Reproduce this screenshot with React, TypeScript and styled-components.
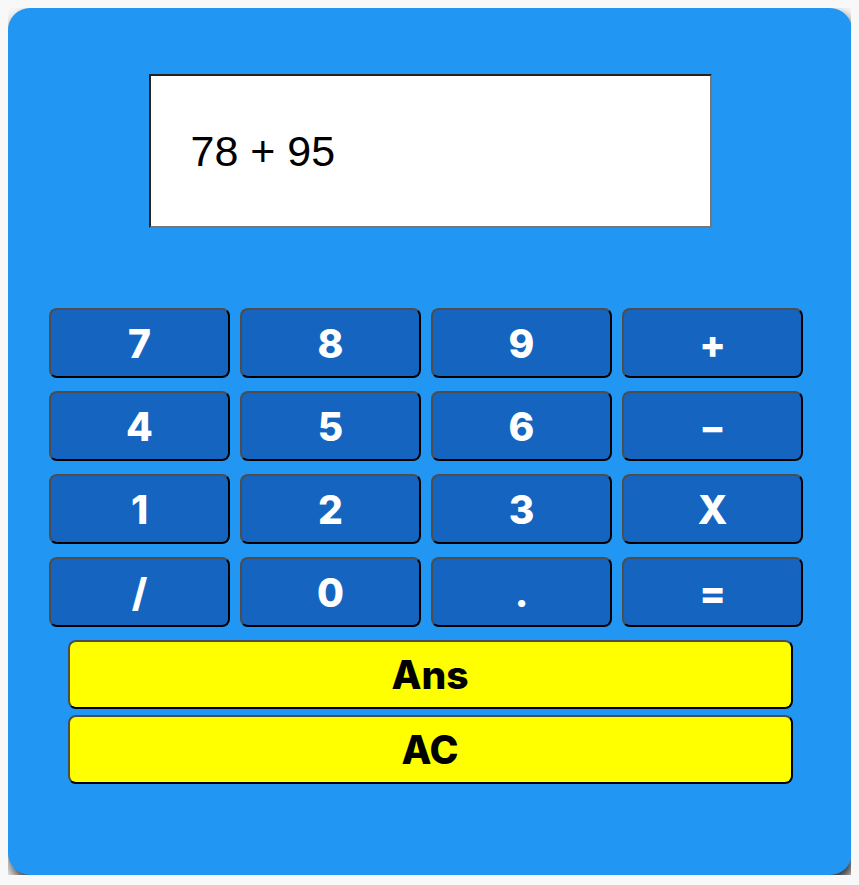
import React from "react";
import styled, { createGlobalStyle } from "styled-components";

const GlobalStyle = createGlobalStyle`
  body {
    margin: 8px;
    background: #f8f8f8;
    font-family: "Liberation Sans", Arial, sans-serif;
  }
`;

const Card = styled.div`
  display: flex;
  flex-direction: column;
  align-items: center;
  width: 844px;
  height: 867px;
  box-sizing: border-box;
  padding-top: 66px;
  background-color: #2196f3;
  border-radius: 22px;
  box-shadow: 3px 8px 14px rgba(0, 0, 0, 0.85);
`;

const Display = styled.div`
  box-sizing: border-box;
  width: 563px;
  height: 154px;
  display: flex;
  align-items: center;
  padding-left: 40px;
  background: #fff;
  border: 2px solid;
  border-color: #222 #767676 #767676 #222;
  font-family: "Liberation Sans", Arial, sans-serif;
  font-size: 43px;
  color: #000;
`;

const Keypad = styled.div`
  align-self: flex-start;
  display: grid;
  grid-template-columns: repeat(4, 181px);
  grid-auto-rows: 70px;
  column-gap: 10px;
  row-gap: 13px;
  margin: 80px 0 0 41px;
`;

const Key = styled.button`
  box-sizing: border-box;
  display: flex;
  align-items: center;
  justify-content: center;
  padding: 0;
  border: 2px solid;
  border-color: #4d4d4d #000 #000 #4d4d4d;
  border-radius: 8px;
  background: #1565c0;
  color: #fff;
  font-family: Inter, "Open Sans", sans-serif;
  font-weight: 800;
  font-size: 39px;
  line-height: 1;
`;

const Actions = styled.div`
  display: flex;
  flex-direction: column;
  gap: 6px;
  margin-top: 13px;
`;

const ActionKey = styled(Key)`
  width: 725px;
  height: 69px;
  background: #ffff00;
  color: #000;
`;

const keys = ["7", "8", "9", "+", "4", "5", "6", "–", "1", "2", "3", "X", "/", "0", ".", "="];

export default function App() {
  return (
    <>
      <GlobalStyle />
      <Card>
        <Display>78 + 95</Display>
        <Keypad>
          {keys.map((k) => (
            <Key key={k}>{k}</Key>
          ))}
        </Keypad>
        <Actions>
          <ActionKey>Ans</ActionKey>
          <ActionKey>AC</ActionKey>
        </Actions>
      </Card>
    </>
  );
}
